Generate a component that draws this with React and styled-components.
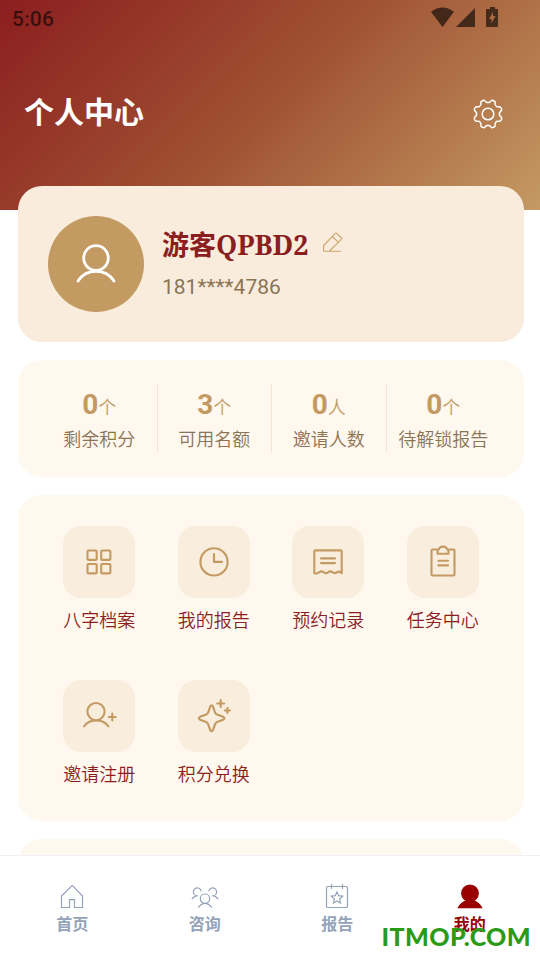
import styled, { createGlobalStyle } from "styled-components";

const gearPath = () => {
  const points = [];
  for (let i = 0; i < 144; i++) {
    const angle = (i / 144) * Math.PI * 2;
    const r = 12.9 - 1.6 * Math.tanh(1.7 * Math.cos(8 * angle));
    points.push(
      `${(16 + r * Math.cos(angle)).toFixed(2)} ${(16 + r * Math.sin(angle)).toFixed(2)}`
    );
  }
  return `M${points.join("L")}Z`;
};

const stats = [
  { value: 0, unit: "个", label: "剩余积分" },
  { value: 3, unit: "个", label: "可用名额" },
  { value: 0, unit: "人", label: "邀请人数" },
  { value: 0, unit: "个", label: "待解锁报告" },
];

const menu = [
  {
    label: "八字档案",
    icon: (
      <>
        <rect x="24.5" y="24.5" width="9.2" height="9.4" rx="1" />
        <rect x="38.2" y="24.5" width="9.2" height="9.4" rx="1" />
        <rect x="24.5" y="38" width="9.2" height="9.4" rx="1" />
        <rect x="38.2" y="38" width="9.2" height="9.4" rx="1" />
      </>
    ),
  },
  {
    label: "我的报告",
    icon: (
      <>
        <circle cx="36" cy="35.9" r="13.6" />
        <path d="M36 28v7.9h8" />
      </>
    ),
  },
  {
    label: "预约记录",
    icon: (
      <>
        <path d="M22.3 47.3V25.6q0-1.2 1.2-1.2h25q1.2 0 1.2 1.2v21.7q-2.4-2.6-4.5-1.2-2.4 2-4.600.2-2.200-1.700-4.400 0-2.200 1.700-4.400 0-2.200-1.700-4.500-.2-2.900 2-5 1.200Z" />
        <path d="M29 32.400h14M29 37.100h14" />
      </>
    ),
  },
  {
    label: "任务中心",
    icon: (
      <>
        <path d="M30 23.500h-4.500q-1 0-1 1v24q0 1 1 1h21q1 0 1-1v-24q0-1-1-1H42" />
        <path d="M30.500 27.800v-2.300q0-1.500 1.200-2c1.200-3.800 7.400-3.800 8.600 0q1.200.5 1.200 2v2.300Z" />
        <path d="M31.400 34.800h9.600M31.400 39.400h9.600" />
      </>
    ),
  },
  {
    label: "邀请注册",
    icon: (
      <>
        <circle cx="33" cy="31.600" r="8.600" />
        <path d="M21 46.300a15.600 15.600 0 0 1 24.400 0M49.300 33.500v7M45.800 37h7" />
      </>
    ),
  },
  {
    label: "积分兑换",
    icon: (
      <>
        <path d="M32.200 26.600q1.400-2.600 2.800 0l2 5.700q.7 1.900 2.600 2.500l5.600 2q2.400 1.400 0 2.900l-5.600 2q-1.900.7-2.600 2.600l-2 5.800q-1.400 2.400-2.800 0l-2-5.800q-.7-1.900-2.600-2.600l-5.600-2q-2.400-1.500 0-2.900l5.600-2q1.900-.6 2.600-2.500Z" />
        <path d="M42.700 20v7M39.200 23.500h7M49.400 28v5M46.900 30.500h5" />
      </>
    ),
  },
];

const tabs = [
  {
    label: "首页",
    icon: (
      <path d="M14 2.600 3.500 13v11.500h8v-7.800h5v7.800h8V13L14.800 2.900Q14.400 2.400 14 2.600Z" />
    ),
  },
  {
    label: "咨询",
    icon: (
      <>
        <circle cx="14" cy="15.700" r="4.700" />
        <path d="M7.200 24.500q6.800-8.200 13.600 0M10.300 8.300a4 4 0 1 0-5.800 4.200M6.800 12.700q-3.400 0-5.900 3.400M17.700 8.300a4 4 0 1 1 5.800 4.200M21.200 12.700q3.400 0 5.900 3.400" />
      </>
    ),
  },
  {
    label: "报告",
    icon: (
      <>
        <rect x="3.500" y="3.500" width="21" height="21" rx="1" />
        <path d="M8.500 1v5M19.500 1v5M14 9l1.700 3.700 4 .5-3 2.800.8 4L14 18l-3.500 2 .8-4-3-2.800 4-.5Z" />
      </>
    ),
  },
  {
    label: "我的",
    active: true,
    icon: (
      <>
        <circle cx="14" cy="10.300" r="8.300" />
        <path d="M2.300 24.700q2.500-5 8.700-7.200h6q6.200 2.200 8.700 7.200Z" />
      </>
    ),
  },
];

const App = () => {
  return (
    <>
      <GlobalStyle />
      <Page>
        <Header>
          <StatusBar>
            <span>5:06</span>
            <StatusIcons viewBox="0 0 68 21">
              <path d="M0 4.800Q11.500-3.800 23 4.800L11.500 20ZM25 20 44 1v19Z" />
              <path
                fillRule="evenodd"
                d="M59 0h5v2h2q1 0 1 1v16q0 1-1 1H56q-1 0-1-1V3q0-1 1-1h3ZM62 5l-4 7h2.500v4l4-7H62Z"
              />
            </StatusIcons>
          </StatusBar>
          <TitleBar>
            <Title>个人中心</Title>
            <Gear viewBox="0 0 32 32">
              <path d={gearPath()} />
              <circle cx="16" cy="16" r="5.800" />
            </Gear>
          </TitleBar>
        </Header>
        <Content>
          <ProfileCard>
            <Avatar>
              <svg viewBox="0 0 96 96">
                <circle cx="48" cy="42" r="12.300" />
                <path d="M30 65a21.500 21.500 0 0 1 36 0" />
              </svg>
            </Avatar>
            <div>
              <NameRow>
                <Name>
                  游客<Code>QPBD2</Code>
                </Name>
                <EditIcon viewBox="0 0 20 20">
                  <path d="M.6 19.300v-5.800L12.300 1.300q.7-.7 1.400 0l4.700 4.700q.7.700 0 1.400L6 19.300M9.300 4.500l5.800 5.700M.6 19.300h17.200" />
                </EditIcon>
              </NameRow>
              <Phone>181****4786</Phone>
            </div>
          </ProfileCard>
          <StatsCard>
            {stats.map((item) => (
              <Stat key={item.label}>
                <StatValue>
                  <b>{item.value}</b>
                  {item.unit}
                </StatValue>
                <StatLabel>{item.label}</StatLabel>
              </Stat>
            ))}
          </StatsCard>
          <MenuCard>
            {menu.map((item) => (
              <MenuItem key={item.label}>
                <MenuIcon viewBox="0 0 72 72">{item.icon}</MenuIcon>
                <MenuLabel>{item.label}</MenuLabel>
              </MenuItem>
            ))}
          </MenuCard>
          <NextCard />
        </Content>
        <TabBar>
          {tabs.map((tab) => (
            <Tab key={tab.label} $active={tab.active}>
              <TabIcon viewBox="0 0 28 28" $active={tab.active}>
                {tab.icon}
              </TabIcon>
              <span>{tab.label}</span>
            </Tab>
          ))}
        </TabBar>
        <Watermark>ITMOP.COM</Watermark>
      </Page>
    </>
  );
};

const GlobalStyle = createGlobalStyle`
  * {
    box-sizing: border-box;
  }

  body {
    margin: 0;
    font-family: Roboto, "Noto Sans CJK SC", sans-serif;
  }
`;

const Page = styled.div`
  position: relative;
  display: flex;
  flex-direction: column;
  width: 540px;
  height: 960px;
  overflow: hidden;
  background: #fff;
`;

const Header = styled.header`
  flex: none;
  height: 210px;
  background: linear-gradient(135deg, #8b1e1f 0%, #a05233 50%, #c49a63 100%);
`;

const StatusBar = styled.div`
  display: flex;
  align-items: center;
  justify-content: space-between;
  height: 36px;
  padding: 2px 41px 0 12px;
  color: rgba(0, 0, 0, 0.6);
  font-size: 21px;
  font-weight: 500;
  letter-spacing: 0.2px;
  line-height: 36px;
`;

const StatusIcons = styled.svg`
  width: 68px;
  height: 21px;
  margin-top: -3px;
  fill: currentColor;
`;

const TitleBar = styled.div`
  display: flex;
  align-items: center;
  justify-content: space-between;
  height: 156px;
  padding: 0 36px 0 24px;
`;

const Title = styled.h1`
  margin: -9px 0 0;
  color: #fff;
  font-family: "Noto Sans CJK SC", sans-serif;
  font-size: 30px;
  font-weight: 700;
`;

const Gear = styled.svg`
  width: 32px;
  height: 32px;
  fill: none;
  stroke: #fff;
  stroke-width: 1.5;
`;

const Content = styled.main`
  display: flex;
  flex: 1;
  flex-direction: column;
  gap: 18px;
  min-height: 0;
  margin-top: -24px;
  padding: 0 16px 0 18px;
  overflow: hidden;
`;

const Card = styled.section`
  flex: none;
  border-radius: 24px;
  background: #fff8ee;
`;

const ProfileCard = styled(Card)`
  display: flex;
  gap: 18px;
  height: 156px;
  padding: 30px;
  background: #f9ecdc;
`;

const Avatar = styled.div`
  width: 96px;
  height: 96px;
  border-radius: 50%;
  background: #c49a63;

  svg {
    display: block;
    fill: none;
    stroke: #fff;
    stroke-width: 2.8;
    stroke-linecap: round;
  }
`;

const NameRow = styled.div`
  display: flex;
  align-items: center;
  gap: 14px;
  height: 52px;
`;

const Name = styled.div`
  color: #8b1e1f;
  font-family: "Noto Sans CJK SC", sans-serif;
  font-size: 27px;
  font-weight: 700;
  line-height: 52px;
  padding-top: 4px;
  white-space: nowrap;
`;

const Code = styled.span`
  font-family: "Noto Serif", "DejaVu Serif Condensed", "DejaVu Serif", serif;
`;

const EditIcon = styled.svg`
  width: 20px;
  height: 20px;
  margin-top: -1px;
  fill: none;
  stroke: #cba36c;
  stroke-width: 1.1;
`;

const Phone = styled.div`
  margin-top: 6px;
  color: #8b7355;
  font-size: 21px;
  line-height: 26px;
`;

const StatsCard = styled(Card)`
  display: grid;
  grid-template-columns: repeat(4, 1fr);
  height: 117px;
  padding: 24px;
`;

const Stat = styled.div`
  display: flex;
  flex-direction: column;
  align-items: center;
  height: 69px;
  white-space: nowrap;

  & + & {
    border-left: 1px solid #f4e5d2;
  }
`;

const StatValue = styled.div`
  height: 41px;
  color: #c49a63;
  font-family: Roboto, "Noto Sans CJK SC DemiLight", "Noto Sans CJK SC", sans-serif;
  font-size: 18px;
  font-weight: 350;
  line-height: 42px;

  b {
    font-size: 28px;
    font-weight: 700;
  }
`;

const StatLabel = styled.div`
  color: #8b7355;
  font-family: "Noto Sans CJK SC DemiLight", "Noto Sans CJK SC", sans-serif;
  font-size: 18px;
  font-weight: 350;
  line-height: 26px;
`;

const MenuCard = styled(Card)`
  display: grid;
  grid-template-columns: repeat(4, 1fr);
  grid-auto-rows: 154px;
  height: 326px;
  padding: 31px 24px 0;
`;

const MenuItem = styled.div`
  display: flex;
  flex-direction: column;
  align-items: center;
`;

const MenuIcon = styled.svg`
  width: 72px;
  height: 72px;
  border-radius: 18px;
  background: #f9eddd;
  fill: none;
  stroke: #c49a63;
  stroke-width: 2.1;
  stroke-linecap: round;
  stroke-linejoin: round;
`;

const MenuLabel = styled.div`
  margin-top: 8px;
  color: #8b1e1f;
  font-family: "Noto Sans CJK SC DemiLight", "Noto Sans CJK SC", sans-serif;
  font-size: 18px;
  font-weight: 350;
  line-height: 26px;
`;

const NextCard = styled(Card)`
  height: 100px;
`;

const TabBar = styled.nav`
  display: grid;
  flex: none;
  grid-template-columns: repeat(4, 1fr);
  height: 105px;
  padding: 27px 4px 0 6px;
  border-top: 1px solid #f0f1f3;
  background: #fff;
`;

const Tab = styled.div`
  display: flex;
  flex-direction: column;
  align-items: center;
  color: ${(props) => (props.$active ? "#990000" : "#94a3b8")};
  font-family: "Noto Sans CJK SC", sans-serif;
  font-size: 16px;
  font-weight: 700;
  line-height: 24px;
`;

const TabIcon = styled.svg`
  width: 28px;
  height: 28px;
  fill: ${(props) => (props.$active ? "currentColor" : "none")};
  stroke: currentColor;
  stroke-width: 1.2;
`;

const Watermark = styled.div`
  position: absolute;
  right: 9px;
  bottom: 9px;
  color: #2a9a17;
  font-family: Lato, "Open Sans", sans-serif;
  font-size: 25px;
  font-weight: 900;
  letter-spacing: 0.4px;
  line-height: 30px;
`;

export default App;
